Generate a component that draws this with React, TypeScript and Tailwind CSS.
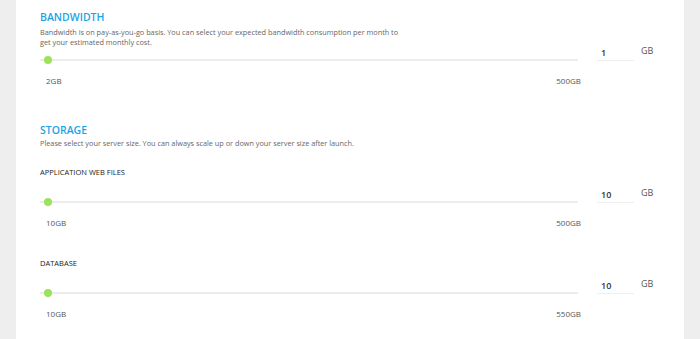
import { FC } from 'react';

type SliderProps = {
  min: string;
  max: string;
  value: number;
  className?: string;
};

const Slider: FC<SliderProps> = ({ min, max, value, className }) => (
  <div className={`flex items-start ${className ?? ''}`}>
    <div className="w-[541px] flex flex-col">
      <div className="relative h-[8px] mr-[3px]">
        <div className="absolute left-0 right-0 top-[3px] h-[2px] bg-[#ececec]" />
        <div className="absolute left-[4px] top-0 w-[8px] h-[8px] rounded-full bg-[#9ce25a]" />
      </div>
      <div className="flex justify-between pl-[6px] mt-[12px] text-[8px] leading-[10px] text-[#555]">
        <span>{min}</span>
        <span>{max}</span>
      </div>
    </div>
    <div className="flex items-start ml-[16px] -mt-[11px]">
      <div className="w-[37px] h-[16px] border-b border-[#eeeeee] pl-[4px] pt-[3px] text-[9px] leading-[10px] font-semibold text-[#333]">
        {value}
      </div>
      <span className="ml-[7px] pt-[1px] text-[9px] leading-[10px] text-[#555]">GB</span>
    </div>
  </div>
);

const App: FC = () => {
  return (
    <div
      className="w-[700px] h-[339px] bg-[#eeeeee] overflow-hidden"
      style={{ fontFamily: '"Open Sans", sans-serif' }}
    >
      <div className="mx-[16px] h-full bg-white pl-[24px] pt-[10px]">
        {/* bandwidth */}
        <h2 className="text-[10.5px] leading-[14px] font-semibold text-[#1ca3e4]">BANDWIDTH</h2>
        <p className="mt-[3px] w-[362px] text-[7.3px] leading-[10px] text-[#666]">
          Bandwidth is on pay-as-you-go basis. You can select your expected bandwidth consumption per month to
          get your estimated monthly cost.
        </p>
        <Slider className="mt-[9px]" min="2GB" max="500GB" value={1} />

        {/* storage */}
        <h2 className="mt-[37px] text-[10.5px] leading-[14px] font-semibold text-[#1ca3e4]">STORAGE</h2>
        <p className="mt-[1px] text-[7.3px] leading-[10px] text-[#666]">
          Please select your server size. You can always scale up or down your server size after launch.
        </p>

        <div className="mt-[19px] text-[7.5px] leading-[10px] text-[#222]">APPLICATION WEB FILES</div>
        <Slider className="mt-[21px]" min="10GB" max="500GB" value={10} />

        <div className="mt-[30px] text-[7.5px] leading-[10px] text-[#222]">DATABASE</div>
        <Slider className="mt-[21px]" min="10GB" max="550GB" value={10} />
      </div>
    </div>
  );
};

export default App;
